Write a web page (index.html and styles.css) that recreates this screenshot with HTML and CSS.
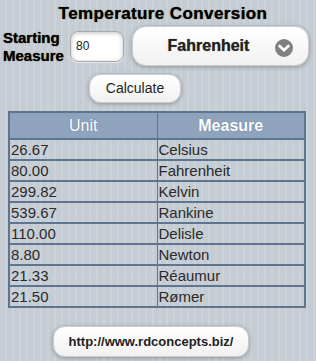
FILE: index.html
```html
<!DOCTYPE html>
<html>
<head>
<meta charset="utf-8">
<link rel="stylesheet" href="styles.css">
</head>
<body>
<div class="page">
  <h1 class="title">Temperature Conversion</h1>
  <div class="form-row">
    <label class="label">Starting<br>Measure</label>
    <div class="input">80</div>
    <div class="select">
      <span class="select-text">Fahrenheit</span>
      <span class="chev">
        <svg width="18" height="18" viewBox="0 0 18 18"><circle cx="9" cy="9" r="9" fill="#808080"/><path d="M4.8 7.2 L9 11.2 L13.2 7.2" fill="none" stroke="#fff" stroke-width="2.6" stroke-linecap="square"/></svg>
      </span>
    </div>
  </div>
  <div class="calc-wrap"><div class="btn calc">Calculate</div></div>
  <table class="results">
    <thead>
      <tr><th class="th-unit">Unit</th><th class="th-measure">Measure</th></tr>
    </thead>
    <tbody>
      <tr><td>26.67</td><td>Celsius</td></tr>
      <tr><td>80.00</td><td>Fahrenheit</td></tr>
      <tr><td>299.82</td><td>Kelvin</td></tr>
      <tr><td>539.67</td><td>Rankine</td></tr>
      <tr><td>110.00</td><td>Delisle</td></tr>
      <tr><td>8.80</td><td>Newton</td></tr>
      <tr><td>21.33</td><td>Réaumur</td></tr>
      <tr><td>21.50</td><td>Rømer</td></tr>
    </tbody>
  </table>
  <div class="foot-wrap"><div class="btn link">http://www.rdconcepts.biz/</div></div>
</div>
</body>
</html>
```
FILE: styles.css
```css
html, body {
  margin: 0;
  padding: 0;
}
body {
  width: 316px;
  height: 361px;
  overflow: hidden;
  font-family: "Liberation Sans", Arial, sans-serif;
  background-color: #c5ccd4;
  background-image: repeating-linear-gradient(90deg, #c5ccd4 0, #c5ccd4 5px, #cbd2d8 5px, #cbd2d8 7px);
  color: #000;
}
.page {
  padding: 4px 0 0 0;
}
.title {
  margin: 0;
  font-size: 17px;
  font-weight: bold;
  text-align: center;
  line-height: 20px;
  padding-left: 10px;
  letter-spacing: 0.4px;
  text-shadow: 0 0 1px #3a2a10;
}
.form-row {
  display: flex;
  align-items: center;
  margin-top: 2px;
  height: 40px;
}
.label {
  font-size: 15px;
  font-weight: bold;
  line-height: 18px;
  padding-left: 3px;
  width: 64px;
  text-shadow: 0 0 1px #3a2a10;
  margin-top: 1px;
}
.input {
  box-sizing: border-box;
  width: 54px;
  height: 31px;
  margin-left: 3px;
  margin-top: 0px;
  background: #fff;
  border: 1px solid #a8a8a8;
  border-radius: 8px;
  box-shadow: inset 0 1px 4px rgba(0,0,0,0.25), 0 1px 0 rgba(255,255,255,0.6);
  font-size: 12px;
  line-height: 29px;
  padding-left: 5px;
  color: #222;
}
.select {
  box-sizing: border-box;
  width: 177px;
  height: 40px;
  margin-left: 8px;
  border: 1px solid #ccc;
  border-radius: 14px;
  background: linear-gradient(#ffffff, #f1f1f1);
  box-shadow: 0 1px 4px rgba(0,0,0,0.3);
  display: flex;
  align-items: center;
  position: relative;
}
.select-text {
  flex: 1;
  text-align: center;
  font-size: 16px;
  font-weight: bold;
  color: #222;
  padding-right: 24px;
  text-shadow: 0 0 1px #6a5a40;
}
.chev {
  position: absolute;
  right: 15px;
  top: 12px;
  width: 18px;
  height: 18px;
  display: block;
}
.chev svg {
  display: block;
}
.calc-wrap {
  display: flex;
  justify-content: flex-start;
  padding-left: 89px;
  margin-top: 8px;
}
.btn {
  box-sizing: border-box;
  border: 1px solid #ccc;
  border-radius: 12px;
  background: linear-gradient(#ffffff, #f1f1f1);
  box-shadow: 0 1px 4px rgba(0,0,0,0.3);
  font-size: 14px;
  color: #222;
  text-align: center;
}
.calc {
  width: 92px;
  height: 29px;
  line-height: 27px;
}
.results {
  margin: 8px 0 0 8px;
  width: 298px;
  border-collapse: collapse;
  border: 2px solid #5e7591;
  font-size: 15px;
  color: #2a2a2a;
}
.results th {
  background: #8fa3bd;
  color: #fff;
  font-size: 16px;
  font-weight: normal;
  height: 25px;
  padding: 0;
  border: 1px solid #5e7591;
  border-bottom-width: 2px;
  text-shadow: 0 0 1px #5a6f89;
}
.results th.th-measure {
  font-weight: bold;
}
.results td {
  height: 19px;
  padding: 0 0 0 1px;
  line-height: 19px;
  border: 1px solid #5e7591;
  border-bottom-width: 2px;
  width: 50%;
}
.foot-wrap {
  display: flex;
  justify-content: flex-start;
  padding-left: 53px;
  margin-top: 18px;
}
.link {
  width: 196px;
  height: 31px;
  line-height: 29px;
  font-size: 13px;
  font-weight: bold;
}
```
